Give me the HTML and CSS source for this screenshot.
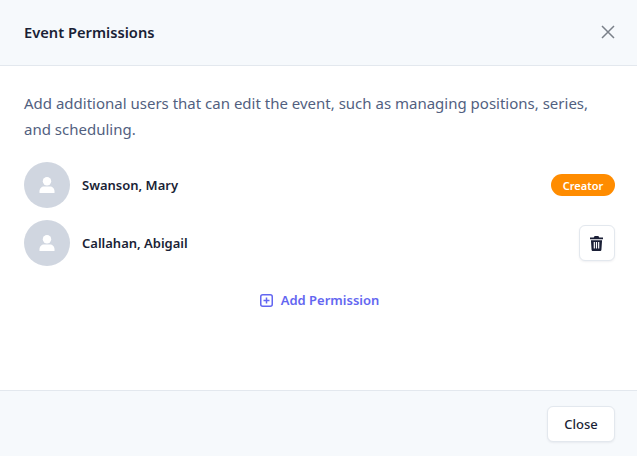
FILE: index.html
```html
<!DOCTYPE html>
<html lang="en">
<head>
<meta charset="utf-8">
<title>Event Permissions</title>
<link rel="stylesheet" href="styles.css">
</head>
<body>
<div class="modal">
  <header class="modal-header">
    <h1 class="modal-title">Event Permissions</h1>
    <button class="icon-close" aria-label="Close">
      <svg width="14" height="14" viewBox="0 0 14 14"><path d="M1 1l12 12M13 1L1 13" fill="none" stroke="currentColor" stroke-width="1.5"/></svg>
    </button>
  </header>
  <main class="modal-body">
    <p class="intro">Add additional users that can edit the event, such as managing positions, series, and scheduling.</p>
    <ul class="user-list">
      <li class="user-row">
        <span class="avatar"><svg width="16" height="16" viewBox="0 0 16 16"><circle cx="8" cy="4.2" r="4.2" fill="currentColor"/><path d="M.5 16v-1.800C.5 11.500 2.500 9.400 5 9.400h6c2.500 0 4.500 2.100 4.500 4.800V16z" fill="currentColor"/></svg></span>
        <span class="user-name">Swanson, Mary</span>
        <span class="badge">Creator</span>
      </li>
      <li class="user-row">
        <span class="avatar"><svg width="16" height="16" viewBox="0 0 16 16"><circle cx="8" cy="4.2" r="4.2" fill="currentColor"/><path d="M.5 16v-1.800C.5 11.500 2.500 9.400 5 9.400h6c2.500 0 4.500 2.100 4.500 4.800V16z" fill="currentColor"/></svg></span>
        <span class="user-name">Callahan, Abigail</span>
        <button class="btn-delete" aria-label="Delete">
          <svg width="13" height="15" viewBox="0 0 14 16"><path fill="currentColor" fill-rule="evenodd" d="M5 0h4l1 1.500h4V3.500H0V1.500h4zM1 4.500h12l-.7 10.100c0 .8-.7 1.400-1.500 1.400H3.200c-.8 0-1.500-.6-1.500-1.400zM4 6.500v7h1.300v-7zM6.350 6.500v7h1.300v-7zM8.700 6.500v7H10v-7z"/></svg>
        </button>
      </li>
    </ul>
    <a class="add-link" href="#">
      <svg width="13" height="13" viewBox="0 0 13 13"><rect x=".75" y=".75" width="11.500" height="11.500" rx="2" fill="none" stroke="currentColor" stroke-width="1.500"/><path d="M6.500 3.500v6M3.500 6.500h6" stroke="currentColor" stroke-width="1.500"/></svg>
      <span>Add Permission</span>
    </a>
  </main>
  <footer class="modal-footer">
    <button class="btn-close">Close</button>
  </footer>
</div>
</body>
</html>
```
FILE: styles.css
```css
* { box-sizing: border-box; }
html, body { margin: 0; height: 100%; }
body { font-family: "Noto Sans", "Open Sans", sans-serif; background: #fff; }
.modal { width: 637px; height: 456px; display: flex; flex-direction: column; background: #fff; overflow: hidden; }
.modal-header { height: 66px; flex: none; display: flex; align-items: center; justify-content: space-between; padding: 0 22px 2px 24px; background: #f6f9fc; border-bottom: 1px solid #e3e8ee; }
.modal-title { margin: 0; font-size: 14.700px; font-weight: 600; color: #1a1f36; }
.icon-close { display: flex; padding: 0; border: 0; background: none; color: #7a8089; }
.modal-body { flex: 1; padding: 24px 22px 0 24px; }
.intro { margin: 0; font-size: 15px; line-height: 26px; color: #525f7f; }
.user-list { list-style: none; margin: 20px 0 0; padding: 0; display: flex; flex-direction: column; gap: 12px; }
.user-row { display: flex; align-items: center; gap: 12px; height: 46px; }
.avatar { width: 46px; height: 46px; flex: none; border-radius: 50%; background: #d0d6e0; color: #fff; display: flex; align-items: center; justify-content: center; }
.user-name { flex: 1; font-size: 13px; font-weight: 600; color: #1a1f36; }
.badge { width: 64px; height: 22px; border-radius: 11px; background: #ff8c00; color: #fff; font-size: 11px; font-weight: 600; display: flex; align-items: center; justify-content: center; }
.btn-delete { width: 36px; height: 36px; display: flex; align-items: center; justify-content: center; padding: 0 1px 0 0; background: #fff; border: 1px solid #e3e8ee; border-radius: 6px; box-shadow: 0 1px 2px rgba(60,66,87,.08); color: #1a1f36; }
.add-link { display: flex; align-items: center; justify-content: center; gap: 8px; margin-top: 25px; color: #6366f1; font-size: 13px; font-weight: 600; text-decoration: none; }
.modal-footer { height: 66px; flex: none; display: flex; align-items: center; justify-content: flex-end; padding: 0 22px; background: #f6f9fc; border-top: 1px solid #e3e8ee; }
.btn-close { width: 68px; height: 36px; padding: 0; background: #fff; border: 1px solid #e3e8ee; border-radius: 6px; box-shadow: 0 1px 2px rgba(60,66,87,.08); font: 500 13px "Noto Sans", sans-serif; color: #1a1f36; }
```
